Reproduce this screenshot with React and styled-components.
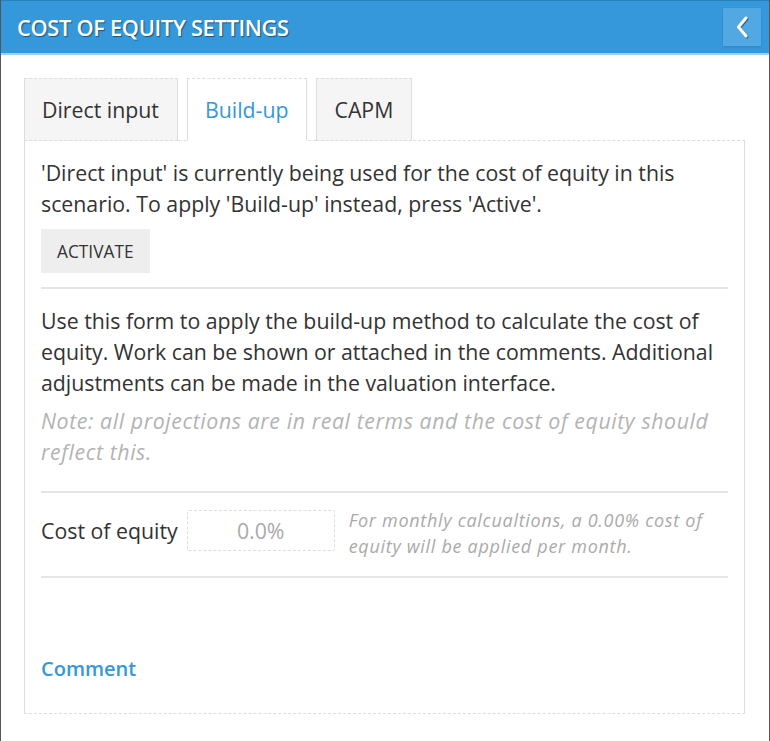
import React, { useState } from 'react';
import styled, { createGlobalStyle } from 'styled-components';

const Global = createGlobalStyle`
  html, body {
    margin: 0;
    padding: 0;
    background: #fff;
  }
  body {
    font-family: "Open Sans", "Noto Sans", sans-serif;
    color: #333;
  }
`;

const Frame = styled.div`
  width: 770px;
  height: 741px;
  box-sizing: border-box;
  border-left: 1px solid #555;
  border-right: 1px solid #555;
  display: flex;
  flex-direction: column;
`;

const Header = styled.div`
  height: 52px;
  background: #3498db;
  border-top: 1px solid #2a7fb8;
  border-bottom: 2px solid #a7cfee;
  box-sizing: content-box;
  display: flex;
  align-items: center;
  justify-content: space-between;
  padding: 0 8px 0 16px;
`;

const Title = styled.h1`
  margin: 0;
  font-size: 21.8px;
  font-weight: 600;
  color: #fff;
  text-shadow: 1px 1px 1px rgba(0, 0, 0, 0.45);
  letter-spacing: -0.3px;
`;

const BackButton = styled.button`
  width: 38px;
  height: 38px;
  border: none;
  background: #52a8e2;
  box-shadow: 0 1px 2px rgba(0, 0, 0, 0.15);
  display: flex;
  align-items: center;
  justify-content: center;
  padding: 0;
  cursor: pointer;
  svg {
    filter: drop-shadow(1px 1px 0 rgba(0, 0, 0, 0.4));
  }
`;

const Body = styled.div`
  padding: 23px 24px 0 23px;
`;

const Tabs = styled.div`
  display: flex;
  gap: 9px;
  position: relative;
  z-index: 1;
`;

const Tab = styled.button`
  height: 63px;
  padding: 0 18px 0 17px;
  font-family: inherit;
  font-size: 21.3px;
  background: ${p => (p.$active ? '#fff' : '#f5f5f5')};
  color: ${p => (p.$active ? '#3498db' : '#333')};
  border: 1px solid #ddd;
  border-top-style: dashed;
  border-bottom: ${p => (p.$active ? '1px solid #fff' : '1px dashed #ddd')};
  margin-bottom: -1px;
  cursor: pointer;
`;

const Panel = styled.div`
  height: 574px;
  box-sizing: border-box;
  border: 1px solid #ddd;
  border-top-style: dashed;
  border-bottom-style: dashed;
  padding: 16px 16px 0 16px;
  display: flex;
  flex-direction: column;
`;

const Text = styled.p`
  margin: 0;
  font-size: 21.3px;
  line-height: 31px;
  color: #333;
`;

const Note = styled(Text)`
  font-style: italic;
  color: #b3b3b3;
  margin-top: 7px;
  letter-spacing: 0.6px;
`;

const ActivateButton = styled.button`
  align-self: flex-start;
  margin-top: 10px;
  height: 44px;
  padding: 0 16px;
  border: none;
  background: #eee;
  font-family: inherit;
  font-size: 17.3px;
  color: #333;
  text-transform: uppercase;
  cursor: pointer;
`;

const Section = styled.div`
  border-bottom: 2px solid #e5e5e5;
  padding-bottom: ${p => p.$pb}px;
  margin-bottom: ${p => p.$mb}px;
  display: flex;
  flex-direction: column;
`;

const Row = styled.div`
  display: flex;
  align-items: flex-start;
  gap: 9px;
`;

const Label = styled.label`
  margin-top: 3px;
  font-size: 21.3px;
  line-height: 41px;
  color: #333;
`;

const Input = styled.input`
  margin-top: 3px;
  width: 148px;
  height: 41px;
  box-sizing: border-box;
  border: 1px dashed #ddd;
  border-radius: 2px;
  text-align: center;
  font-family: inherit;
  font-size: 21.3px;
  color: #333;
  outline: none;
  &::placeholder {
    color: #aaa;
  }
`;

const Hint = styled.span`
  margin-left: 5px;
  font-size: 18px;
  letter-spacing: 0.7px;
  font-style: italic;
  color: #aaa;
  line-height: 26px;
  width: 370px;
`;

const CommentLink = styled.a`
  margin-top: auto;
  margin-bottom: 31px;
  font-size: 20px;
  font-weight: 600;
  color: #3498db;
  text-decoration: none;
  cursor: pointer;
`;

export default function App() {
  const [tab, setTab] = useState('build');
  const tabs = [
    { id: 'direct', label: 'Direct input' },
    { id: 'build', label: 'Build-up' },
    { id: 'capm', label: 'CAPM' },
  ];

  return (
    <>
      <Global />
      <Frame>
        <Header>
          <Title>COST OF EQUITY SETTINGS</Title>
          <BackButton aria-label="Back">
            <svg width="16" height="24" viewBox="0 0 16 24">
              <path d="M12 3 L4.5 12 L12 21" fill="none" stroke="#fff" strokeWidth="3" strokeLinecap="round" strokeLinejoin="round" />
            </svg>
          </BackButton>
        </Header>
        <Body>
          <Tabs>
            {tabs.map(t => (
              <Tab key={t.id} $active={tab === t.id} onClick={() => setTab(t.id)}>
                {t.label}
              </Tab>
            ))}
          </Tabs>
          <Panel>
            <Section $pb={14} $mb={16}>
              <Text>
                'Direct input' is currently being used for the cost of equity in this scenario. To apply 'Build-up' instead, press 'Active'.
              </Text>
              <ActivateButton>Activate</ActivateButton>
            </Section>
            <Section $pb={24} $mb={14}>
              <Text>
                Use this form to apply the build-up method to calculate the cost of equity. Work can be shown or attached in the comments. Additional adjustments can be made in the valuation interface.
              </Text>
              <Note>
                Note: all projections are in real terms and the cost of equity should reflect this.
              </Note>
            </Section>
            <Section $pb={17} $mb={0}>
              <Row>
                <Label>Cost of equity</Label>
                <Input placeholder="0.0%" />
                <Hint>For monthly calcualtions, a 0.00% cost of equity will be applied per month.</Hint>
              </Row>
            </Section>
            <CommentLink>Comment</CommentLink>
          </Panel>
        </Body>
      </Frame>
    </>
  );
}
